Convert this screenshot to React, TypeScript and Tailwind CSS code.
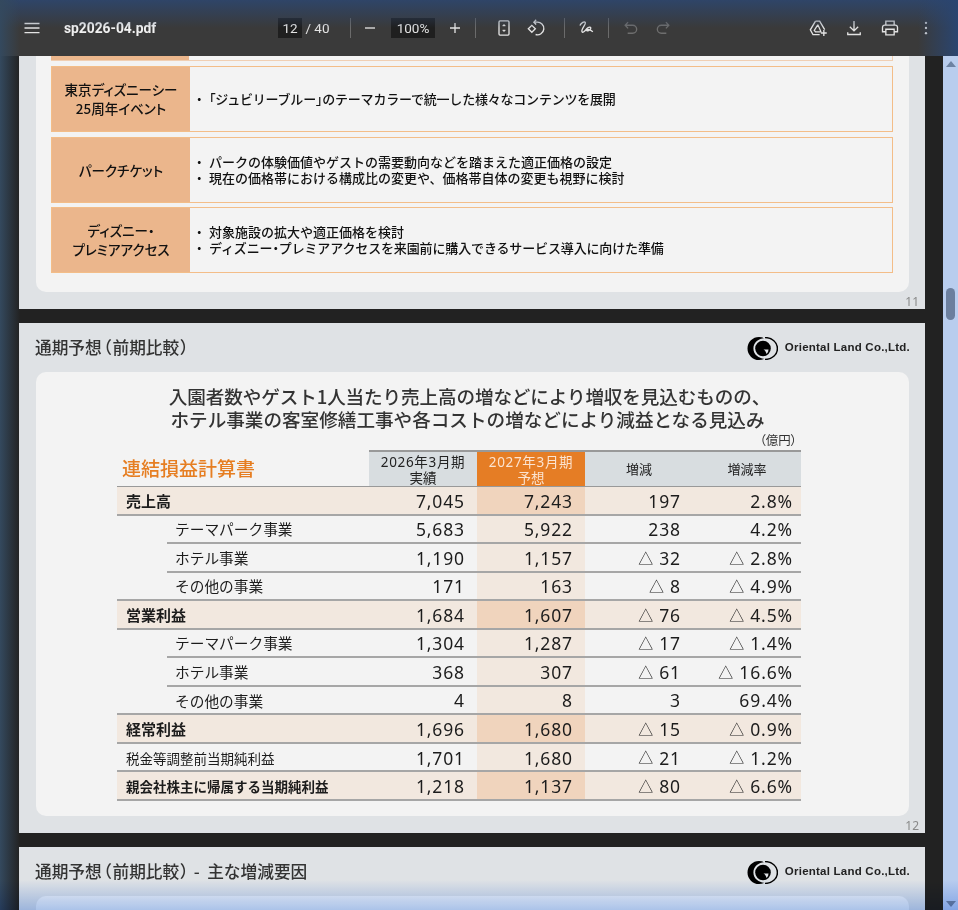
import React from "react";

const jp = `font-['Noto_Sans_CJK_JP',sans-serif]`;
const num = `font-['Noto_Sans','Noto_Sans_CJK_JP',sans-serif]`;

type Row = {
  label: string;
  values: string[];
  major?: boolean;
  sub?: boolean;
  inset?: boolean;
  small?: boolean;
};

const rows: Row[] = [
  { label: "売上高", values: ["7,045", "7,243", "197", "2.8%"], major: true },
  { label: "テーマパーク事業", values: ["5,683", "5,922", "238", "4.2%"], sub: true, inset: true },
  { label: "ホテル事業", values: ["1,190", "1,157", "△ 32", "△ 2.8%"], sub: true, inset: true },
  { label: "その他の事業", values: ["171", "163", "△ 8", "△ 4.9%"], sub: true },
  { label: "営業利益", values: ["1,684", "1,607", "△ 76", "△ 4.5%"], major: true },
  { label: "テーマパーク事業", values: ["1,304", "1,287", "△ 17", "△ 1.4%"], sub: true, inset: true },
  { label: "ホテル事業", values: ["368", "307", "△ 61", "△ 16.6%"], sub: true, inset: true },
  { label: "その他の事業", values: ["4", "8", "3", "69.4%"], sub: true },
  { label: "経常利益", values: ["1,696", "1,680", "△ 15", "△ 0.9%"], major: true },
  { label: "税金等調整前当期純利益", values: ["1,701", "1,680", "△ 21", "△ 1.2%"], small: true },
  { label: "親会社株主に帰属する当期純利益", values: ["1,218", "1,137", "△ 80", "△ 6.6%"], major: true, small: true },
];

const measures = [
  {
    label: ["東京ディズニーシー", "25周年イベント"],
    lines: [{ text: "「ジュビリーブルー」のテーマカラーで統一した様々なコンテンツを展開", spacing: "tracking-[-0.21px]" }],
  },
  {
    label: ["パークチケット"],
    lines: [
      { text: "パークの体験価値やゲストの需要動向などを踏まえた適正価格の設定", spacing: "" },
      { text: "現在の価格帯における構成比の変更や、価格帯自体の変更も視野に検討", spacing: "" },
    ],
  },
  {
    label: ["ディズニー・", "プレミアアクセス"],
    lines: [
      { text: "対象施設の拡大や適正価格を検討", spacing: "" },
      { text: "ディズニー・プレミアアクセスを来園前に購入できるサービス導入に向けた準備", spacing: "tracking-[-0.14px]" },
    ],
  },
];

// brackets and middle dots are set half width in the slides
function Tight({ text, pad = "" }: { text: string; pad?: string }) {
  return (
    <>
      {text.split(/([「」・（）])/).map((part, i) =>
        i % 2 === 1 ? (
          <span key={i} className={`[font-feature-settings:'palt'] ${pad}`}>
            {part}
          </span>
        ) : (
          part
        ),
      )}
    </>
  );
}

function Icon({ children, className = "" }: { children: React.ReactNode; className?: string }) {
  return (
    <button className={`flex h-8 w-8 shrink-0 items-center justify-center ${className}`}>
      <svg viewBox="0 0 24 24" className="h-5 w-5" fill="none" stroke="currentColor" strokeWidth="1.6">
        {children}
      </svg>
    </button>
  );
}

function Divider({ className = "" }: { className?: string }) {
  return <div className={`h-5 w-px shrink-0 bg-[#6b6b6b] ${className}`} />;
}

function Toolbar() {
  return (
    <div className="flex h-14 shrink-0 items-center bg-[#3a3a3a] text-[#e3e3e3]">
      <div className="flex w-[278px] shrink-0 items-center pl-4">
        <Icon>
          <path d="M3 6.5h18M3 12h18M3 17.5h18" strokeWidth="1.7" />
        </Icon>
        <span className="ml-4 font-['Roboto',sans-serif] text-[13.8px] font-bold text-[#f1f1f1]">sp2026-04.pdf</span>
      </div>
      <div className="flex items-center font-['Roboto',sans-serif] text-[13.5px]">
        <span className="flex h-5 w-6 items-center justify-center bg-[#1f1f1f]">12</span>
        <span className="ml-[2px] w-[27px] text-center">/ 40</span>
        <Divider className="ml-[19px]" />
        <Icon className="ml-[3px]">
          <path d="M6 12h12" />
        </Icon>
        <span className="ml-[5px] flex h-5 w-11 items-center justify-center bg-[#1f1f1f]">100%</span>
        <Icon className="ml-1">
          <path d="M12 6v12M6 12h12" />
        </Icon>
        <Divider className="ml-1" />
        <Icon className="ml-3">
          <rect x="6" y="3.5" width="12" height="17" rx="1.2" />
          <path d="M10.3 9.5 12 7.6l1.7 1.9zM10.3 14.5 12 16.4l1.7-1.9z" fill="currentColor" strokeWidth="0.6" />
        </Icon>
        <Icon>
          <path d="M2.8 13 7 8.8l4.2 4.2L7 17.2z" />
          <path d="M11.5 19.8A7.6 7.6 0 1 0 13 5h-3.5" />
          <path d="M12.2 2.2 9.5 5l2.7 2.8" />
        </Icon>
        <Divider className="ml-3" />
        <Icon className="ml-[6px]">
          <path d="M3.500 9c1.500-3.500 5.500-5.500 6.500-3.500 1 2-5.500 8-4 11 1 2 4-1.500 5.500-3.500 1.500-2 5.500-3 5-.5-.5 2.500-5 4-5 2 0-1.500 4.500-.5 7.500 2" />
        </Icon>
        <Divider className="ml-[5px]" />
        <Icon className="ml-[6px] text-[#6e6e6e]">
          <path d="M8.500 5 5 8.700l3.500 3.700M5 8.700h9a4.800 4.800 0 0 1 0 9.600H8" />
        </Icon>
        <Icon className="text-[#6e6e6e]">
          <path d="M15.500 5 19 8.700l-3.500 3.700M19 8.700h-9a4.800 4.800 0 0 0 0 9.600h6" />
        </Icon>
      </div>
      <div className="ml-auto flex items-center gap-1 pr-4">
        <Icon>
          <path d="M9 3.800h5l6 10.200" />
          <path d="M9 3.800 2.800 14.200 6 20h8" />
          <path d="m11.500 8.500-4 6.500 1.500 1.500h6.500l-1-2.500-2.500-5.500z" strokeWidth="1.5" />
          <path d="M19 14.500v7M15.500 18h7" />
        </Icon>
        <Icon>
          <path d="M12 3.500v11.500M7 10.500l5 5 5-5M4.500 17v2.800h15V17" />
        </Icon>
        <Icon>
          <path d="M7 8V3.800h10V8M7 16.500H3V11a2.500 2.500 0 0 1 2.500-2.500h13A2.500 2.500 0 0 1 21 11v5.500h-4" />
          <path d="M7 13.500h10v6.700H7z" />
        </Icon>
        <Icon>
          <circle cx="12" cy="5.800" r="1.400" fill="currentColor" stroke="none" />
          <circle cx="12" cy="12" r="1.400" fill="currentColor" stroke="none" />
          <circle cx="12" cy="18.200" r="1.400" fill="currentColor" stroke="none" />
        </Icon>
      </div>
    </div>
  );
}

function Logo() {
  return (
    <div className="flex items-center">
      <svg viewBox="0 0 31 23" className="h-[23px] w-[31px]">
        <path d="M12 0a11.500 11.500 0 1 0 0 23c2 0 3.800-.5 5.400-1.300-5-.1-11-3.700-11-10.200S12.400 1.400 17.400 1.300C15.800.5 14 0 12 0z" fill="#000" />
        <circle cx="16" cy="11.500" r="7.800" fill="#000" />
        <path d="M16.500 12.500h5a5.500 5.500 0 0 1-2 4.500c-.3-1.800-1.300-3.500-3-4.500z" fill="#dfe2e5" />
        <path d="M18 .6c7 0 12.400 4.700 12.400 10.900S25 22.400 18 22.400" fill="none" stroke="#000" strokeWidth="1.500" />
      </svg>
      <span className="ml-[7px] font-['Liberation_Sans',sans-serif] text-[11.5px] font-bold tracking-[0.02em] text-[#222]">
        Oriental Land Co.,Ltd.
      </span>
    </div>
  );
}

function PageHeader({ title }: { title: string }) {
  return (
    <div className="flex h-[49px] shrink-0 items-center justify-between pt-[1px] pr-[15px] pl-4">
      <span className={`${jp} text-[16.7px] font-medium whitespace-pre text-[#333]`}>
        <Tight text={title} pad="px-[1.2px]" />
      </span>
      <Logo />
    </div>
  );
}

function PageNumber({ n }: { n: number }) {
  return <div className="flex h-[17px] shrink-0 items-center justify-end pt-[3px] pr-[6px] text-[12px] leading-none text-[#8a8a8a]">{n}</div>;
}

function PrevPage() {
  return (
    <div className="flex h-[253px] shrink-0 flex-col bg-[#dfe2e5]">
      <div className="ml-[17px] mr-4 flex h-[236px] shrink-0 flex-col rounded-b-[10px] bg-[#f3f3f3] pr-4 pl-[15px]">
        <div className="flex h-[5px] border-r border-b border-[#f0cfb3]">
          <div className="w-[138px] bg-[#ebb68c]" />
        </div>
        {measures.map((m, i) => (
          <div key={m.label[0]} className={`flex h-[66px] border border-[#f3bd88] ${i < 2 ? "mt-[5px]" : "mt-1"}`}>
            <div
              className={`${jp} flex w-[138px] shrink-0 flex-col items-center justify-center bg-[#ebb68c] text-[13.5px] leading-[19px] font-medium text-[#111] [font-feature-settings:'palt']`}
            >
              {m.label.map((l) => (
                <span key={l}>{l}</span>
              ))}
            </div>
            <div className={`${jp} flex flex-1 flex-col justify-center pl-[6px] text-[13px] leading-[16px] font-medium text-[#111]`}>
              {m.lines.map((l) => (
                <div key={l.text} className="flex">
                  <span className="w-[13px] [font-feature-settings:'palt']">・</span>
                  <span className={l.spacing}>
                    <Tight text={l.text} />
                  </span>
                </div>
              ))}
            </div>
          </div>
        ))}
      </div>
      <PageNumber n={11} />
    </div>
  );
}

function Value({ text }: { text: string }) {
  if (!text.startsWith("△")) return <>{text}</>;
  return (
    <>
      <span className={`${jp} mr-[6px] text-[15px] tracking-normal`}>△</span>
      {text.slice(2)}
    </>
  );
}

function ProfitTable() {
  return (
    <div className="ml-[81px] w-[684px]">
      <div className="flex h-[36px]">
        <div className={`${jp} flex w-[252px] items-center pl-[5px] text-[19px] font-medium text-[#e67e22]`}>連結損益計算書</div>
        <div className={`${jp} flex w-[108px] flex-col items-center justify-center border-t-2 border-[#999] bg-[#d8dde0] pt-[1px] text-[13.5px] leading-[15px] text-[#222]`}>
          <span className={`${num} tracking-[0.05em]`}>2026年3月期</span>
          <span>実績</span>
        </div>
        <div className={`${jp} flex w-[108px] flex-col items-center justify-center border-t-2 border-[#999] bg-[#e57d25] pt-[1px] text-[13.5px] leading-[15px] text-[#fbe3d0]`}>
          <span className={`${num} tracking-[0.05em]`}>2027年3月期</span>
          <span>予想</span>
        </div>
        <div className={`${jp} flex w-[108px] items-center justify-center border-t-2 border-[#999] bg-[#d8dde0] text-[13px] text-[#222]`}>増減</div>
        <div className={`${jp} flex w-[108px] items-center justify-center border-t-2 border-[#999] bg-[#d8dde0] text-[13px] text-[#222]`}>増減率</div>
      </div>
      <div className="h-px bg-[#999]" />
      {rows.map((r, i) => (
        <div key={i} className="flex h-[28.55px]">
          <div className={`w-[252px] ${r.inset ? "pl-[50px]" : ""}`}>
            <div
              className={`${jp} flex h-full items-center border-b-2 border-[#a6a6a6] pt-[1px] ${r.major ? "bg-[#f2e8df] font-bold" : ""} ${
                r.sub ? (r.inset ? "pl-2" : "pl-[58px]") : "pl-[9px]"
              } ${r.small ? "text-[13.5px]" : r.major ? "text-[15px]" : "text-[14.7px]"} text-[#1c1c1c]`}
            >
              {r.label}
            </div>
          </div>
          {r.values.map((v, j) => (
            <div
              key={j}
              className={`${num} flex h-full w-[108px] items-center justify-end border-b-2 border-[#a6a6a6] pt-[1px] text-[17.5px] tracking-[0.05em] text-[#1c1c1c] ${
                j === 3 ? "pr-[8px]" : "pr-[12px]"
              } ${j === 1 ? (r.major ? "bg-[#f0d4bd]" : "bg-[#f2e8df]") : r.major ? "bg-[#f2e8df]" : ""}`}
            >
              <Value text={v} />
            </div>
          ))}
        </div>
      ))}
    </div>
  );
}

function CurrentPage() {
  return (
    <div className="flex h-[510px] shrink-0 flex-col bg-[#dfe2e5]">
      <PageHeader title="通期予想（前期比較）" />
      <div className="ml-[17px] mr-4 h-[444px] shrink-0 rounded-[10px] bg-[#f3f3f3]">
        <div className={`${jp} pt-[12px] pr-[10px] text-center text-[18.6px] leading-[23px] font-medium text-[#333]`}>
          <div className="pl-[4px] tracking-[-0.12px]">入園者数やゲスト1人当たり売上高の増などにより増収を見込むものの、</div>
          <div>ホテル事業の客室修繕工事や各コストの増などにより減益となる見込み</div>
        </div>
        <div className={`${jp} flex h-[20px] items-center justify-end pt-[1px] pr-[112px] text-[12.5px] text-[#333]`}>
          <Tight text="（億円）" />
        </div>
        <ProfitTable />
      </div>
      <PageNumber n={12} />
    </div>
  );
}

function NextPage() {
  return (
    <div className="h-[63px] shrink-0 bg-[#dfe2e5]">
      <PageHeader title="通期予想（前期比較） -  主な増減要因" />
      <div className="ml-[17px] mr-4 h-[14px] rounded-t-[10px] bg-[#f3f3f3]" />
    </div>
  );
}

function Scrollbar() {
  return (
    <div className="flex w-[15px] shrink-0 flex-col items-center justify-between bg-[#b9cdee] pt-[5px] pb-[3px]">
      <svg viewBox="0 0 10 6" className="h-[6px] w-[10px]">
        <path d="M5 0l5 6H0z" fill="#6e83a3" />
      </svg>
      <div className="absolute top-[288px] h-8 w-[9px] rounded-full bg-[#6c7f9e]" />
      <svg viewBox="0 0 10 6" className="h-[6px] w-[10px]">
        <path d="M0 0h10L5 6z" fill="#6e83a3" />
      </svg>
    </div>
  );
}

export default function App() {
  return (
    <div className="relative flex h-[910px] w-[958px] flex-col overflow-hidden bg-[#222]">
      <Toolbar />
      <div className="flex min-h-0 flex-1">
        <div className="flex flex-1 flex-col gap-[14px] overflow-hidden pr-[18px] pl-[19px]">
          <PrevPage />
          <CurrentPage />
          <NextPage />
        </div>
        <Scrollbar />
      </div>
      {/* window backdrop bleeding through the edges */}
      <div className="pointer-events-none absolute inset-x-0 top-0 h-[28px] bg-gradient-to-b from-[#2f4568] to-transparent" />
      <div className="pointer-events-none absolute inset-y-0 left-0 w-[20px] bg-gradient-to-r from-[#34495e] to-transparent" />
      <div className="pointer-events-none absolute top-0 right-0 h-[56px] w-[40px] bg-gradient-to-l from-[#2a4570] to-transparent" />
      <div className="pointer-events-none absolute inset-x-0 bottom-0 h-[30px] bg-gradient-to-t from-[#b4cdf5] to-white mix-blend-multiply" />
    </div>
  );
}
